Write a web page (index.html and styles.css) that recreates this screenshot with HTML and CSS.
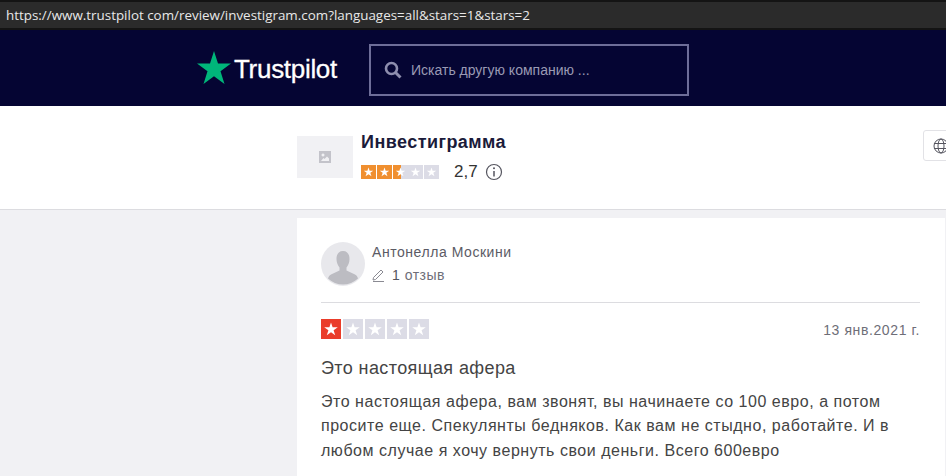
FILE: index.html
```html
<!DOCTYPE html>
<html lang="ru">
<head>
  <meta charset="UTF-8">
  <title>Инвестиграмма - Trustpilot</title>
  <link rel="stylesheet" href="styles.css">
</head>
<body>

  <!-- Адресная строка -->
  <div class="address-bar">https://www.trustpilot com/review/investigram.com?languages=all&amp;stars=1&amp;stars=2</div>

  <!-- Шапка -->
  <header class="top">
    <div class="logo">
      <svg class="logo-star" viewBox="0 0 34 33" width="34" height="33">
        <path fill="#00b67a" d="M17 0l4 12.500h13l-10.500 7.700 4 12.800L17 25.200 6.500 33l4-12.800L0 12.500h13z"/>
      </svg>
      <span class="logo-text">Trustpilot</span>
    </div>
    <div class="search">
      <svg viewBox="0 0 18 18" width="18" height="18">
        <circle cx="7.500" cy="7.500" r="5.500" fill="none" stroke="#8e8eae" stroke-width="2.600"/>
        <path d="M11.500 11.500l5 5" stroke="#8e8eae" stroke-width="3"/>
      </svg>
      <span>Искать другую компанию ...</span>
    </div>
  </header>

  <!-- Компания -->
  <section class="company">
    <div class="company-logo">
      <svg viewBox="0 0 14 14" width="14" height="14">
        <path fill="#c3c3ca" fill-rule="evenodd" d="M1 1h12v12H1zM5 3.500a1.500 1.500 0 1 0 .01 0zM3 11h8V8.500L9 6.500 6.500 9 5.500 8z"/>
      </svg>
    </div>
    <div class="company-info">
      <div class="company-name">Инвестиграмма</div>
      <div class="company-rating">
        <div class="stars stars-small">
          <span class="star orange"><svg viewBox="0 0 10 10"><use href="#star"/></svg></span>
          <span class="star orange"><svg viewBox="0 0 10 10"><use href="#star"/></svg></span>
          <span class="star half"><svg viewBox="0 0 10 10"><use href="#star"/></svg></span>
          <span class="star"><svg viewBox="0 0 10 10"><use href="#star"/></svg></span>
          <span class="star"><svg viewBox="0 0 10 10"><use href="#star"/></svg></span>
        </div>
        <span class="score">2,7</span>
        <svg viewBox="0 0 18 18" width="18" height="18">
          <circle cx="9" cy="9" r="7.500" fill="none" stroke="#55555f" stroke-width="1.200"/>
          <path d="M9 8v5.500" stroke="#55555f" stroke-width="1.500"/>
          <circle cx="9" cy="5.300" r="1" fill="#55555f"/>
        </svg>
      </div>
    </div>
    <div class="lang">
      <svg viewBox="0 0 16 16" width="16" height="16" fill="none" stroke="#55555f" stroke-width="1">
        <circle cx="8" cy="8" r="7"/>
        <ellipse cx="8" cy="8" rx="3" ry="7"/>
        <path d="M1 5.500h14M1 10.500h14"/>
      </svg>
    </div>
  </section>

  <!-- Отзыв -->
  <main class="content">
    <article class="card">
      <div class="author">
        <svg class="avatar" viewBox="0 0 44 44" width="44" height="44">
          <circle cx="22" cy="22" r="22" fill="#e8e8ec"/>
          <path fill="#bcbcc2" d="M22 9c4.500 0 6.500 3.500 6.500 8 0 3.500-1.300 6.500-3 8.500v3l8.500 4c1.500.7 2.500 2 3 4a22 22 0 0 1-30 0c.5-2 1.500-3.300 3-4l8.500-4v-3c-1.700-2-3-5-3-8.500 0-4.500 2-8 6.500-8z"/>
        </svg>
        <div class="author-info">
          <div class="author-name">Антонелла Москини</div>
          <div class="author-count">
            <svg viewBox="0 0 14 14" width="14" height="14" fill="none" stroke="#8a8a92" stroke-width="1">
              <path d="M1.500 9.500L9 2l2 2-7.500 7.500-2.500.5zM1 13.500h11"/>
            </svg>
            <span><b>1</b> отзыв</span>
          </div>
        </div>
      </div>
      <div class="review-head">
        <div class="stars stars-big">
          <span class="star red"><svg viewBox="0 0 10 10"><use href="#star"/></svg></span>
          <span class="star"><svg viewBox="0 0 10 10"><use href="#star"/></svg></span>
          <span class="star"><svg viewBox="0 0 10 10"><use href="#star"/></svg></span>
          <span class="star"><svg viewBox="0 0 10 10"><use href="#star"/></svg></span>
          <span class="star"><svg viewBox="0 0 10 10"><use href="#star"/></svg></span>
        </div>
        <div class="date">13 янв.2021 г.</div>
      </div>
      <h2 class="review-title">Это настоящая афера</h2>
      <p class="review-text">Это настоящая афера, вам звонят, вы начинаете со 100 евро, а потом просите еще. Спекулянты бедняков. Как вам не стыдно, работайте. И в любом случае я хочу вернуть свои деньги. Всего 600евро</p>
    </article>
  </main>

  <svg class="defs" width="0" height="0">
    <symbol id="star" viewBox="0 0 10 10">
      <path fill="#fff" d="M5 1.700l.8 2.400h2.600L6.300 5.600l.8 2.500L5 6.600 2.900 8.100l.8-2.500L1.600 4.100h2.600z"/>
    </symbol>
  </svg>

</body>
</html>
```

FILE: styles.css
```css
html, body {
  margin: 0;
  height: 476px;
  overflow: hidden;
}

body {
  font-family: "Liberation Sans", Arial, sans-serif;
  background-color: #f1f1f4;
  color: #333;
}

.defs {
  display: block;
  height: 0;
}

/* --- Адресная строка --- */
.address-bar {
  height: 30px;
  padding-left: 6px;
  box-sizing: border-box;
  background-color: #2b2b2b;
  border-top: 2px solid #141414;
  border-bottom: 2px solid #141414;
  color: #e8e8e8;
  font-family: "Open Sans", sans-serif;
  font-size: 13.4px;
  line-height: 27px;
  white-space: nowrap;
}

/* --- Шапка --- */
.top {
  display: flex;
  align-items: flex-start;
  height: 62px;
  padding-top: 14px;
  padding-left: 197px;
  background-color: #050533;
}

.logo {
  display: flex;
  align-items: center;
  width: 172px;
  margin-top: 6px;
  flex: none;
}

.logo-text {
  margin-left: 3px;
  margin-top: 4px;
  color: #fff;
  font-size: 26px;
  letter-spacing: -0.3px;
  -webkit-text-stroke: 0.3px #fff;
}

.search {
  display: flex;
  align-items: center;
  gap: 9px;
  width: 320px;
  height: 52px;
  padding-left: 13px;
  box-sizing: border-box;
  border: 2px solid #6e6e99;
  color: #9a9ab4;
  font-size: 14px;
}

/* --- Компания --- */
.company {
  display: flex;
  height: 103px;
  padding-left: 297px;
  background: white;
  border-bottom: 1px solid #dcdce0;
}

.company-logo {
  display: flex;
  align-items: center;
  justify-content: center;
  flex: none;
  width: 56px;
  height: 42px;
  margin-top: 30px;
  margin-right: 8px;
  background-color: #f1f1f4;
}

.company-info {
  flex: none;
  width: 562px;
  padding-top: 26px;
}

.company-name {
  color: #1b1b3a;
  font-size: 18px;
  font-weight: bold;
  letter-spacing: 0.45px;
}

.company-rating {
  display: flex;
  align-items: center;
  margin-top: 9px;
}

.score {
  margin-left: 15px;
  margin-right: 7px;
  font-size: 17px;
}

.lang {
  flex: none;
  display: flex;
  align-items: center;
  padding-left: 9px;
  width: 40px;
  height: 31px;
  margin-top: 24px;
  box-sizing: border-box;
  background: white;
  border: 1px solid #e2e2e6;
  border-radius: 3px;
}

/* --- Звезды --- */
.stars {
  display: flex;
  gap: 0.75px;
}

.star {
  display: block;
  background-color: #dcdce6;
}

.star svg {
  display: block;
  width: 100%;
  height: 100%;
}

.star.orange {
  background-color: #f08f2f;
}

.star.half {
  background: linear-gradient(to right, #f08f2f 50%, #dcdce6 50%);
}

.star.red {
  background-color: #ea3c2a;
}

.stars-small .star {
  width: 15px;
  height: 14px;
}

.stars-big {
  gap: 2px;
}

.stars-big .star {
  width: 20px;
  height: 20px;
}

/* --- Отзыв --- */
.content {
  padding-top: 8px;
  padding-left: 297px;
}

.card {
  width: 599px;
  padding: 24px 25px 24px 24px;
  background: white;
}

.author {
  display: flex;
  gap: 7px;
  padding-bottom: 16px;
  border-bottom: 1px solid #dcdce0;
}

.avatar {
  flex: none;
}

.author-info {
  padding-top: 2px;
}

.author-name {
  color: #5b5b65;
  font-size: 14px;
  letter-spacing: 0.55px;
}

.author-count {
  display: flex;
  align-items: center;
  gap: 6px;
  margin-top: 7px;
  color: #6e6e78;
  font-size: 14px;
  letter-spacing: 0.5px;
}

.author-count b {
  font-weight: normal;
  color: #55555f;
}

.review-head {
  display: flex;
  justify-content: space-between;
  align-items: center;
  margin-top: 16px;
}

.date {
  margin-top: 1px;
  color: #6e6e78;
  font-size: 14px;
  letter-spacing: 0.6px;
}

.review-title {
  margin: 19px 0 0;
  color: #444;
  font-size: 18px;
  font-weight: normal;
  letter-spacing: 0.4px;
}

.review-text {
  margin: 11px 0 0;
  color: #444;
  font-size: 16px;
  line-height: 24.4px;
  letter-spacing: 0.53px;
}
```
